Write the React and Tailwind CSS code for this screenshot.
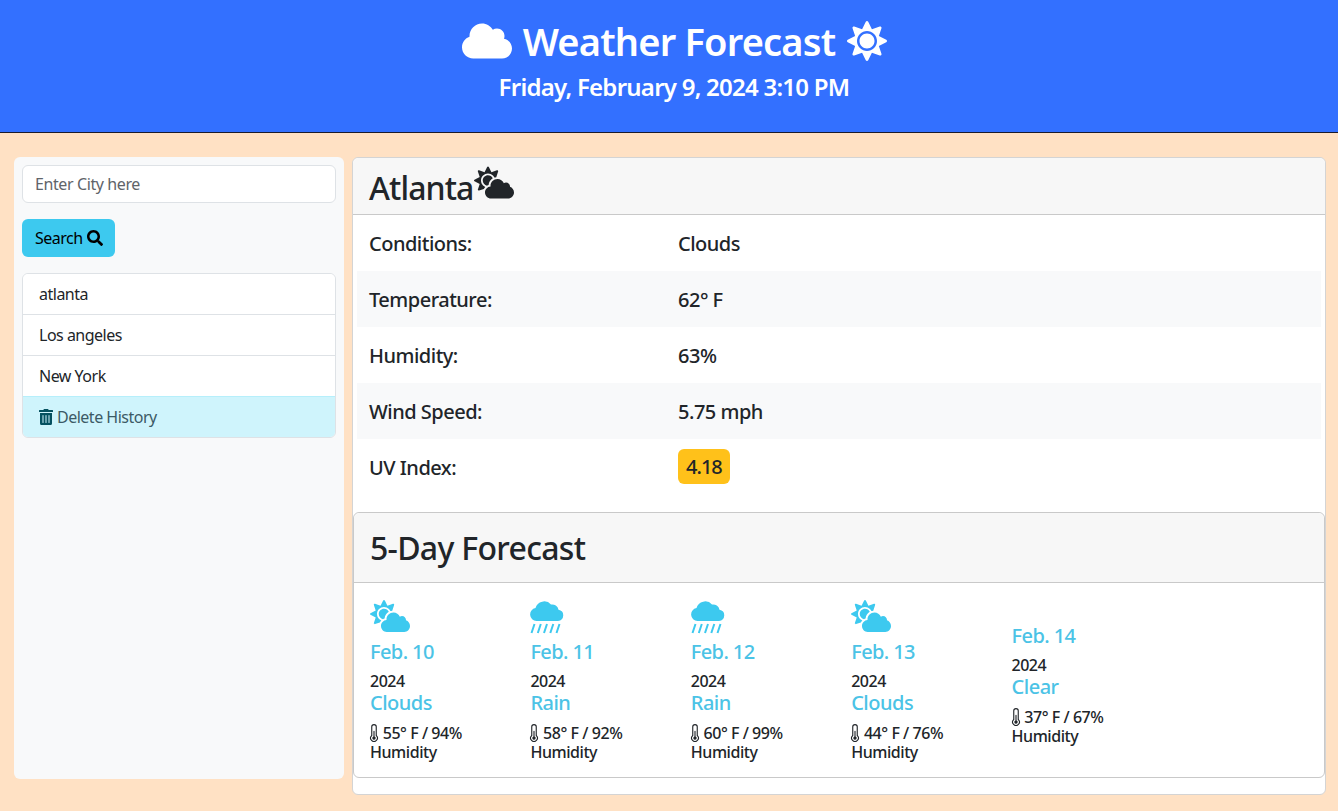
import React from 'react';
import { FaCloud, FaSun, FaSearch, FaTrashAlt, FaCloudSun } from 'react-icons/fa';
import { BsThermometerHalf } from 'react-icons/bs';

const rows = [
  ['Conditions:', 'Clouds', false],
  ['Temperature:', '62° F', true],
  ['Humidity:', '63%', false],
  ['Wind Speed:', '5.75 mph', true],
];

// cloud with five slanted rain strokes
const RainIcon = () => (
  <svg viewBox="0 0 40 34" className="block h-[34px] w-[40px] text-[#3dc9ef]" fill="currentColor">
    <path d="M6.500 21a6.500 6.500 0 0 1-1-12.900A9 9 0 0 1 21 4.500a6.500 6.500 0 0 1 7.500 5.200A5.700 5.700 0 0 1 28 21Z" />
    <path stroke="currentColor" strokeWidth="2" fill="none" d="M1.500 33l3-9M7.800 33l3-9M14 33l3-9M20.300 33l3-9M26.500 33l3-9" />
  </svg>
);

const CloudSunIcon = () => <FaCloudSun className="block h-[32px] w-[40px] text-[#3dc9ef]" />;

const forecast = [
  { date: 'Feb. 10', cond: 'Clouds', temp: '55° F / 94%', Icon: CloudSunIcon },
  { date: 'Feb. 11', cond: 'Rain', temp: '58° F / 92%', Icon: RainIcon },
  { date: 'Feb. 12', cond: 'Rain', temp: '60° F / 99%', Icon: RainIcon },
  { date: 'Feb. 13', cond: 'Clouds', temp: '44° F / 76%', Icon: CloudSunIcon },
  { date: 'Feb. 14', cond: 'Clear', temp: '37° F / 67%', Icon: null },
];

const ForecastDay = ({ day }) => {
  const { Icon } = day;
  return (
    <div className="w-[160.4px]">
      {Icon && <div className="h-[32px]"><Icon /></div>}
      <div className="text-[20px] leading-[24px] mt-[8px] mb-[6px] text-[#4bc3e6] font-medium tracking-[-0.6px]">{day.date}</div>
      <div className="text-[16px] leading-[22px] font-medium tracking-[-0.5px]">2024</div>
      <div className="text-[20px] leading-[22px] mb-[10px] text-[#4bc3e6] font-medium tracking-[-0.5px]">{day.cond}</div>
      <div className="text-[16px] leading-[19px] font-medium tracking-[-0.45px]">
        <BsThermometerHalf className="inline-block h-[18px] w-[18px] -ml-[5px] -mr-[4px] align-[-3px]" /> {day.temp}
        <br />
        Humidity
      </div>
    </div>
  );
};

export default function App() {
  return (
    <div className="min-h-[811px] bg-[#ffe1c4] text-[#212529] font-['Noto_Sans','Open_Sans',sans-serif]">
      <header className="h-[133px] bg-[#3370ff] border-b border-[#1a1a2e] text-white text-center pt-[14px] pl-[10px]">
        <h1 className="flex items-center justify-center gap-[10px] text-[38px] leading-[54px] font-semibold tracking-[-0.8px]">
          <FaCloud className="h-[40px] w-[52px]" />
          Weather Forecast
          <FaSun className="h-[40px] w-[40px] ml-[2px]" />
        </h1>
        <div className="text-[24px] leading-[36px] font-semibold mt-[1px] tracking-[-0.75px]">Friday, February 9, 2024 3:10 PM</div>
      </header>

      <div className="flex gap-[8px] pl-[14px] pr-[12px] pt-[24px] items-start">
        <aside className="w-[330px] h-[622px] shrink-0 bg-[#f8f9fa] rounded-[6px] p-[8px]">
          <input
            placeholder="Enter City here"
            className="block w-full h-[38px] px-[12px] bg-white border border-[#dee2e6] rounded-[6px] text-[16px] tracking-[-0.4px] placeholder:text-[#5f6469] outline-none"
          />
          <button className="mt-[16px] h-[38px] pl-[13px] pr-[12px] flex items-center gap-[4px] bg-[#3dc9ef] rounded-[6px] text-[16px] text-black tracking-[-0.5px]">
            Search <FaSearch className="h-[16px] w-[16px]" />
          </button>
          <ul className="mt-[16px] border border-[#dee2e6] rounded-[6px] overflow-hidden text-[16px] tracking-[-0.5px]">
            <li className="h-[41px] px-[16px] flex items-center bg-white border-b border-[#dee2e6]">atlanta</li>
            <li className="h-[41px] px-[16px] flex items-center bg-white border-b border-[#dee2e6]">Los angeles</li>
            <li className="h-[40px] px-[16px] flex items-center bg-white">New York</li>
            <li className="h-[41px] px-[16px] flex items-center gap-[4px] bg-[#cff4fc] border-t border-[#b6effb] text-[#3c5a66]">
              <FaTrashAlt className="h-[16px] w-[14px] text-[#055160]" /> Delete History
            </li>
          </ul>
        </aside>

        <main className="flex-1 h-[638px] bg-white border border-[#d4d4d4] rounded-[6px]">
          <div className="h-[57px] flex items-center px-[16px] bg-[#f7f7f7] border-b border-[#c9c9c9] rounded-t-[6px]">
            <span className="text-[32px] font-medium tracking-[-0.9px] mt-[3px]">Atlanta</span>
            <FaCloudSun className="h-[33px] w-[40px] -mt-[8px] ml-[1px]" />
          </div>
          <div className="px-[4px]">
            {rows.map(([label, value, striped]) => (
              <div key={label} className={`h-[56px] flex items-center px-[12px] pt-[2px] text-[20px] font-medium tracking-[-0.5px] ${striped ? 'bg-[#f8f9fa]' : 'bg-white'}`}>
                <div className="w-[309px]">{label}</div>
                <div>{value}</div>
              </div>
            ))}
            <div className="h-[56px] flex items-center px-[12px] pt-[2px] text-[20px] font-medium tracking-[-0.5px]">
              <div className="w-[309px]">UV Index:</div>
              <div className="bg-[#ffc11a] rounded-[6px] px-[8px] h-[35px] leading-[35px] -mt-[3px] tracking-[-1px]">4.18</div>
            </div>
          </div>
          <section className="mt-[17px] h-[266px] border border-[#c9c9c9] rounded-[6px]">
            <div className="h-[70px] flex items-center px-[16px] bg-[#f7f7f7] border-b border-[#c9c9c9] rounded-t-[6px]">
              <h2 className="text-[32px] font-medium tracking-[-0.7px] mt-[1px]">5-Day Forecast</h2>
            </div>
            <div className="flex items-center px-[16px] pt-[17px]">
              {forecast.map((day) => <ForecastDay key={day.date} day={day} />)}
            </div>
          </section>
        </main>
      </div>
    </div>
  );
}
